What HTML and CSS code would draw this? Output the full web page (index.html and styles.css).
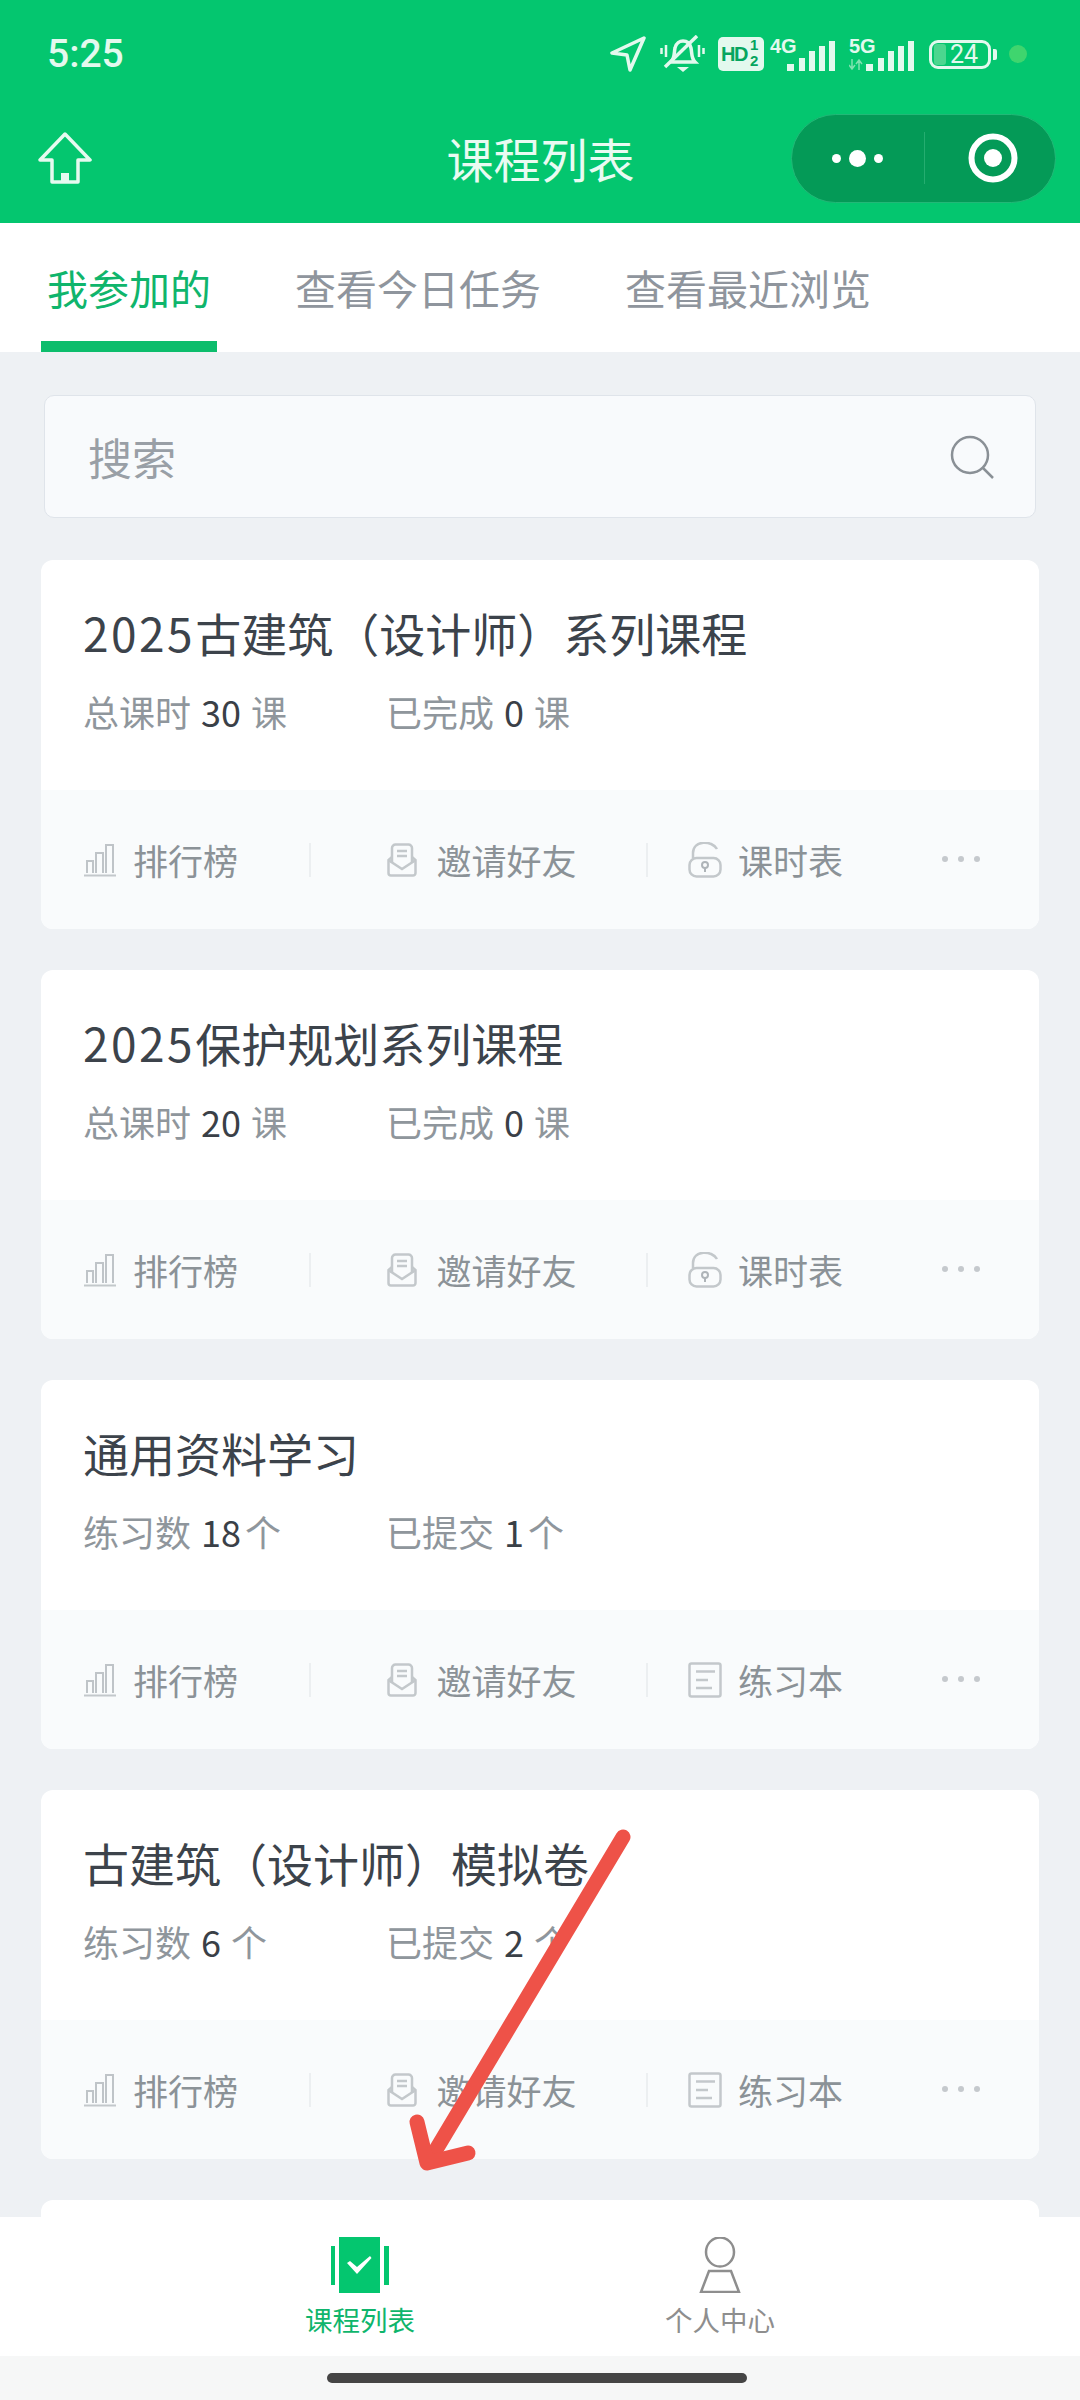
FILE: index.html
```html
<!DOCTYPE html>
<html lang="zh-CN">
<head>
    <meta charset="UTF-8">
    <meta name="viewport" content="width=device-width, initial-scale=1.0">
    <title>课程列表</title>
    <link rel="stylesheet" href="styles.css">
</head>
<body>

<svg class="defs" width="0" height="0">
    <symbol id="i-rank" viewBox="0 0 34 34">
        <path d="M1 32.500H33" stroke="#c3c8cb" stroke-width="2" fill="none"/>
        <path d="M4 30V18H10V30M13 30V10H20V30M23 30V2H30V30" stroke="#bfc4c8" stroke-width="2" fill="none"/>
    </symbol>
    <symbol id="i-mail" viewBox="0 0 30 34">
        <path d="M5 14L1.500 17V30A2.500 2.500 0 0 0 4 32.500H26A2.500 2.500 0 0 0 28.500 30V17L25 14" stroke="#c3c8cb" stroke-width="2.500" fill="none"/>
        <path d="M5 20V5A3.500 3.500 0 0 1 8.500 1.500H21.500A3.500 3.500 0 0 1 25 5V20" stroke="#c3c8cb" stroke-width="2.500" fill="none"/>
        <path d="M2 17.500L15 26L28 17.500M10 8H20M10 13H20" stroke="#c3c8cb" stroke-width="2.500" fill="none"/>
    </symbol>
    <symbol id="i-lock" viewBox="0 0 34 36">
        <path d="M5 16V11C5 -2 24 -2 29 7" stroke="#c3c8cb" stroke-width="2.500" fill="none"/>
        <rect x="1.500" y="16" width="31" height="18.500" rx="7" stroke="#c3c8cb" stroke-width="2.500" fill="none"/>
        <circle cx="17" cy="23" r="3" stroke="#aeb4b8" stroke-width="2" fill="none"/>
        <path d="M17 26V30" stroke="#aeb4b8" stroke-width="2"/>
    </symbol>
    <symbol id="i-book" viewBox="0 0 34 36">
        <rect x="1.500" y="1.500" width="31" height="33" rx="2" stroke="#c3c8cb" stroke-width="2.500" fill="none"/>
        <path d="M8 9.500H27M8 18H20M8 26H24" stroke="#c3c8cb" stroke-width="2.500" fill="none"/>
    </symbol>
</svg>

<div class="page">
    <header class="top">
        <div class="status">
            <span class="time">5:25</span>
            <div class="status-icons">
                <svg class="ic-nav" width="36" height="36" viewBox="0 0 36 36">
                    <path d="M34 2L2 17L17 19L20 34Z" fill="none" stroke="#e3f9ee" stroke-width="3.500" stroke-linejoin="round"/>
                </svg>
                <svg class="ic-bell" width="45" height="38" viewBox="0 0 45 38">
                    <path d="M11 27C15 23 14 17 15 13C16 8 20 6 23 6C27 6 30 9 31 13C32 17 31 23 35 27H10" fill="none" stroke="#e3f9ee" stroke-width="3.500"/>
                    <path d="M37 1L5 32" stroke="#e3f9ee" stroke-width="3.500"/>
                    <path d="M17 32H29L23 37Z" fill="#e3f9ee"/>
                    <path d="M1.500 13V19M6 10V22M39 10V22M43.500 13V19" stroke="#e3f9ee" stroke-width="2.500"/>
                </svg>
                <span class="hd">HD<span class="hd-sim"><i>1</i><i>2</i></span></span>
                <div class="net">
                    <span class="net-name">4G</span>
                    <svg width="48" height="30" viewBox="0 0 48 30"><path d="M0 23h7v7H0zM12 17h6v13h-6zM22 10h6v20h-6zM32 5h6v25h-6zM42 0h6v30h-6z" fill="#e3f9ee"/></svg>
                </div>
                <div class="net net-two">
                    <span class="net-name">5G</span>
                    <svg class="net-arrows" width="14" height="11" viewBox="0 0 14 11"><path d="M3 0V9M0 6L3 10L6 6M10 11V2M7 5L10 1L13 5" fill="none" stroke="#7fe2b0" stroke-width="1.500"/></svg>
                    <svg width="48" height="30" viewBox="0 0 48 30"><path d="M0 23h7v7H0zM12 17h6v13h-6zM22 10h6v20h-6zM32 5h6v25h-6zM42 0h6v30h-6z" fill="#e3f9ee"/></svg>
                </div>
                <div class="battery"><span class="battery-level"></span><span class="battery-num">24</span></div>
                <span class="battery-tip"></span>
                <span class="cam-dot"></span>
            </div>
        </div>
        <div class="navbar">
            <svg class="home" width="54" height="52" viewBox="0 0 54 52">
                <path d="M27 2L52 28H40V50H14V28H2Z" fill="none" stroke="#e6faf0" stroke-width="3.500" stroke-linejoin="round"/>
                <path d="M23 41H31V50H23Z" fill="#e6faf0"/>
            </svg>
            <h1>课程列表</h1>
            <div class="capsule">
                <div class="capsule-part">
                    <span class="dot"></span><span class="dot dot-big"></span><span class="dot"></span>
                </div>
                <div class="capsule-part capsule-right">
                    <svg width="50" height="50" viewBox="0 0 50 50">
                        <circle cx="25" cy="25" r="21.500" fill="none" stroke="#fff" stroke-width="6"/>
                        <circle cx="25" cy="25" r="9" fill="#fff"/>
                    </svg>
                </div>
            </div>
        </div>
    </header>

    <nav class="tabs">
        <a class="tab active" href="#">我参加的</a>
        <a class="tab" href="#">查看今日任务</a>
        <a class="tab" href="#">查看最近浏览</a>
    </nav>

    <main class="list">
        <div class="search">
            <span>搜索</span>
            <svg width="46" height="46" viewBox="0 0 46 46">
                <circle cx="21" cy="21" r="18" fill="none" stroke="#8a9096" stroke-width="2.500"/>
                <path d="M34 34L44 44" stroke="#8a9096" stroke-width="2.500"/>
            </svg>
        </div>

        <section class="card">
            <div class="card-body">
                <h2><span class="year">2025</span>古建筑（设计师）系列课程</h2>
                <div class="stats">
                    <span class="stat">总课时<b>30</b>课</span>
                    <span class="stat">已完成<b>0</b>课</span>
                </div>
            </div>
            <div class="card-foot">
                <a class="act act-rank"><svg width="34" height="34"><use href="#i-rank"/></svg>排行榜</a>
                <a class="act act-invite"><svg width="30" height="34"><use href="#i-mail"/></svg>邀请好友</a>
                <a class="act act-last"><svg width="34" height="36"><use href="#i-lock"/></svg>课时表</a>
                <div class="more"><span></span><span></span><span></span></div>
            </div>
        </section>

        <section class="card">
            <div class="card-body">
                <h2><span class="year">2025</span>保护规划系列课程</h2>
                <div class="stats">
                    <span class="stat">总课时<b>20</b>课</span>
                    <span class="stat">已完成<b>0</b>课</span>
                </div>
            </div>
            <div class="card-foot">
                <a class="act act-rank"><svg width="34" height="34"><use href="#i-rank"/></svg>排行榜</a>
                <a class="act act-invite"><svg width="30" height="34"><use href="#i-mail"/></svg>邀请好友</a>
                <a class="act act-last"><svg width="34" height="36"><use href="#i-lock"/></svg>课时表</a>
                <div class="more"><span></span><span></span><span></span></div>
            </div>
        </section>

        <section class="card">
            <div class="card-body">
                <h2>通用资料学习</h2>
                <div class="stats">
                    <span class="stat">练习数<b class="one">18</b>个</span>
                    <span class="stat">已提交<b class="one">1</b>个</span>
                </div>
            </div>
            <div class="card-foot">
                <a class="act act-rank"><svg width="34" height="34"><use href="#i-rank"/></svg>排行榜</a>
                <a class="act act-invite"><svg width="30" height="34"><use href="#i-mail"/></svg>邀请好友</a>
                <a class="act act-last"><svg width="34" height="36"><use href="#i-book"/></svg>练习本</a>
                <div class="more"><span></span><span></span><span></span></div>
            </div>
        </section>

        <section class="card">
            <div class="card-body">
                <h2>古建筑（设计师）模拟卷</h2>
                <div class="stats">
                    <span class="stat">练习数<b>6</b>个</span>
                    <span class="stat">已提交<b>2</b>个</span>
                </div>
            </div>
            <div class="card-foot">
                <a class="act act-rank"><svg width="34" height="34"><use href="#i-rank"/></svg>排行榜</a>
                <a class="act act-invite"><svg width="30" height="34"><use href="#i-mail"/></svg>邀请好友</a>
                <a class="act act-last"><svg width="34" height="36"><use href="#i-book"/></svg>练习本</a>
                <div class="more"><span></span><span></span><span></span></div>
            </div>
        </section>

        <section class="card"></section>
    </main>

    <footer class="tabbar">
        <a class="bar-item bar-active" href="#">
            <svg width="58" height="56" viewBox="0 0 58 56">
                <path d="M8 0H49V56H8Z" fill="#04c66f"/>
                <path d="M0 9H4V48H0ZM53 9H58V48H53Z" fill="#04c66f"/>
                <path d="M16 26L19 24L26 30L39 19L40.500 21L26 37Z" fill="#fff"/>
            </svg>
            <span>课程列表</span>
        </a>
        <a class="bar-item" href="#">
            <svg width="42" height="56" viewBox="0 0 42 56">
                <ellipse cx="21" cy="15" rx="14" ry="14.500" fill="none" stroke="#8e8e8e" stroke-width="2.500"/>
                <path d="M10 34H32L40 55H2Z" fill="none" stroke="#8e8e8e" stroke-width="2.500"/>
            </svg>
            <span>个人中心</span>
        </a>
    </footer>
    <div class="home-bar"><span></span></div>

    <!-- red arrow drawn on top of the screenshot -->
    <svg class="arrow" width="1080" height="2400" viewBox="0 0 1080 2400">
        <path d="M623 1837L431 2158" fill="none" stroke="#ee5248" stroke-width="15" stroke-linecap="round"/>
        <path d="M417 2122L427 2163L468 2153" fill="none" stroke="#ee5248" stroke-width="15" stroke-linecap="round" stroke-linejoin="round"/>
    </svg>
</div>

</body>
</html>
```

FILE: styles.css
```css
* {
    box-sizing: border-box;
}
body {
    margin: 0;
    padding: 0;
    font-family: "Noto Sans CJK SC", "Noto Sans", sans-serif;
    background-color: #eef1f4;
}
a {
    text-decoration: none;
    color: inherit;
}
.defs {
    position: absolute;
}
.page {
    position: relative;
    width: 1080px;
    height: 2400px;
    display: flex;
    flex-direction: column;
    overflow: hidden;
}

/* green header */
.top {
    height: 223px;
    flex: none;
    background-color: #04c66f;
}
.status {
    height: 108px;
    padding: 0 53px 0 47px;
    display: flex;
    align-items: center;
    justify-content: space-between;
}
.time {
    font-family: Roboto, sans-serif;
    font-weight: 500;
    font-size: 39px;
    color: #e3f9ee;
}
.status-icons {
    display: flex;
    align-items: center;
}
.ic-bell {
    margin-left: 14px;
}
.hd {
    margin-left: 13px;
    width: 46px;
    height: 34px;
    padding-left: 3px;
    border-radius: 5px;
    background-color: #e3f9ee;
    color: #06a55f;
    font-family: "Liberation Sans", sans-serif;
    font-weight: 700;
    font-size: 20px;
    line-height: 34px;
    display: flex;
    letter-spacing: -1.5px;
}
.hd-sim {
    display: flex;
    flex-direction: column;
    margin-left: 3px;
    font-size: 15px;
    line-height: 16px;
}
.hd-sim i {
    font-style: normal;
}
.net {
    margin-left: 6px;
    width: 65px;
    height: 34px;
    display: grid;
}
.net svg {
    grid-area: 1 / 1;
    justify-self: end;
    align-self: end;
}
.net .net-arrows {
    justify-self: start;
    margin-bottom: 1px;
}
.net-name {
    grid-area: 1 / 1;
    justify-self: start;
    font-family: "Liberation Sans", sans-serif;
    font-weight: 700;
    font-size: 20px;
    line-height: 18px;
    color: #e3f9ee;
}
.net-two {
    margin-left: 14px;
}
.battery {
    margin-left: 15px;
    width: 62px;
    height: 29px;
    border: 3px solid #e3f9ee;
    border-radius: 9px;
    display: flex;
    align-items: center;
    position: relative;
}
.battery-level {
    width: 12px;
    height: 21px;
    margin-left: 2px;
    border-radius: 3px;
    background-color: #4cd68f;
}
.battery-num {
    margin-left: 4px;
    font-family: Roboto, sans-serif;
    font-size: 25px;
    line-height: 23px;
    color: #e3f9ee;
}
.battery-tip {
    width: 4px;
    height: 11px;
    margin-left: 2px;
    border-radius: 0 2px 2px 0;
    background-color: #e3f9ee;
}
.cam-dot {
    width: 18px;
    height: 18px;
    margin-left: 12px;
    border-radius: 50%;
    background-color: #3fd56e;
}
.navbar {
    height: 100px;
    padding: 0 24px 0 25px;
    display: grid;
    grid-template-columns: 1fr auto 1fr;
    align-items: center;
}
.home {
    margin-left: 13px;
}
.navbar h1 {
    margin: -2px 0 0;
    font-size: 47px;
    font-weight: 400;
    color: #e9fbf2;
}
.capsule {
    justify-self: end;
    width: 265px;
    height: 89px;
    border-radius: 45px;
    background-color: #049a57;
    border: 1px solid #22b877;
    display: flex;
    align-items: center;
}
.capsule-part {
    width: 50%;
    height: 52px;
    display: flex;
    align-items: center;
    justify-content: center;
    gap: 8px;
}
.capsule-right {
    border-left: 1px solid #25ad70;
    padding-left: 6px;
}
.dot {
    width: 9px;
    height: 9px;
    border-radius: 50%;
    background-color: #fff;
}
.dot-big {
    width: 17px;
    height: 17px;
}

/* tabs */
.tabs {
    height: 129px;
    flex: none;
    padding: 0 0 0 41px;
    background-color: #fff;
    display: flex;
    gap: 72px;
}
.tab {
    height: 129px;
    padding: 0 6px;
    font-size: 41px;
    line-height: 128px;
    color: #8f959d;
}
.tab.active {
    color: #0fb56c;
    border-bottom: 11px solid #0cbd6c;
}

/* list */
.list {
    flex: 1;
    min-height: 0;
    overflow: hidden;
    padding: 43px 41px 0;
}
.search {
    height: 123px;
    margin: 0 3px 42px;
    padding: 0 40px 0 43px;
    border: 1px solid #dfe4ea;
    border-radius: 10px;
    background-color: #f8fafc;
    display: flex;
    align-items: center;
    justify-content: space-between;
    font-size: 44px;
    color: #999fa6;
}
.card {
    height: 369px;
    margin-bottom: 41px;
    border-radius: 12px;
    background-color: #fff;
    overflow: hidden;
}
.card-body {
    height: 230px;
    padding: 38px 42px 0;
}
.card-body h2 {
    margin: 0;
    font-size: 46px;
    font-weight: 400;
    line-height: 68px;
    color: #3c434b;
}
.year {
    letter-spacing: 2.500px;
}
.stats {
    margin-top: 19px;
    display: flex;
    font-size: 36px;
    line-height: 52px;
    color: #8f969c;
}
.stat {
    width: 303px;
}
.stat b {
    margin: 0 10px;
    font-weight: 400;
    color: #3a4047;
}
.stat b.one {
    margin-right: 4px;
}
.card-foot {
    height: 139px;
    background-color: #f9fbfc;
    display: flex;
    align-items: center;
}
.act {
    height: 34px;
    display: flex;
    align-items: center;
    gap: 16px;
    font-size: 35px;
    color: #8b9297;
}
.act-rank {
    width: 268px;
    padding-left: 42px;
}
.act-invite {
    width: 339px;
    padding-left: 7px;
    gap: 19px;
    justify-content: center;
    border-left: 2px solid #eceff1;
    border-right: 2px solid #eceff1;
}
.act-last {
    padding-left: 40px;
}
.more {
    margin-left: auto;
    margin-right: 59px;
    margin-top: -2px;
    display: flex;
    gap: 10px;
}
.more span {
    width: 6px;
    height: 6px;
    border-radius: 50%;
    background-color: #c5c9cd;
}

/* bottom bar */
.tabbar {
    height: 139px;
    flex: none;
    padding-top: 20px;
    background-color: #fff;
    display: flex;
    justify-content: center;
    position: relative;
}
.bar-item {
    width: 360px;
    display: flex;
    flex-direction: column;
    align-items: center;
    font-size: 27.500px;
    line-height: 40px;
    color: #8e8e8e;
}
.bar-item span {
    margin-top: 6px;
}
.bar-active {
    color: #0fb56c;
}
.home-bar {
    height: 44px;
    flex: none;
    padding: 17px 6px 0 0;
    background-color: #f6f7f7;
    display: flex;
    justify-content: center;
}
.home-bar span {
    width: 420px;
    height: 10px;
    border-radius: 5px;
    background-color: #454545;
}
.arrow {
    position: absolute;
    left: 0;
    top: 0;
    pointer-events: none;
}
```
